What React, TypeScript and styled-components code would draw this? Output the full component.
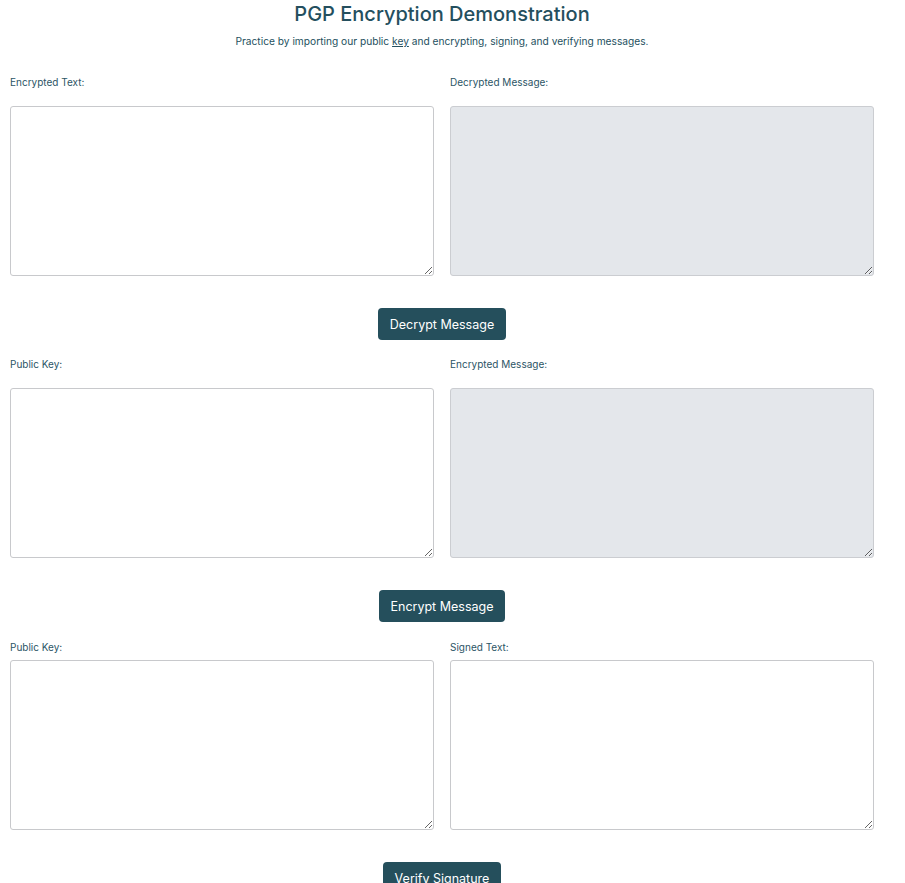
import React from "react";
import styled, { createGlobalStyle } from "styled-components";

const Global = createGlobalStyle`
  html, body { margin: 0; padding: 0; background: #ffffff; }
  body { font-family: Inter, "Liberation Sans", Arial, sans-serif; color: #244f5e; }
`;

const Page = styled.div`
  width: 864px;
  margin: 0 10px;
  display: flex;
  flex-direction: column;
`;

const Title = styled.h1`
  margin: 0;
  font-size: 20px;
  line-height: 28px;
  font-weight: 500;
  text-align: center;
  color: #244f5e;
`;

const Subtitle = styled.p`
  margin: 7px 0 0;
  font-size: 10.2px;
  line-height: 12px;
  text-align: center;
  color: #244f5e;
  a { color: inherit; text-decoration: underline; }
`;

const Section = styled.section<{ $top: number }>`
  margin-top: ${(p) => p.$top}px;
  display: flex;
  flex-direction: column;
`;

const Grid = styled.div`
  display: grid;
  grid-template-columns: 1fr 1fr;
  column-gap: 16px;
`;

const Field = styled.div`
  display: flex;
  flex-direction: column;
`;

const Label = styled.label<{ $gap: number }>`
  font-size: 10px;
  line-height: 12px;
  color: #2c5566;
  margin-bottom: ${(p) => p.$gap}px;
`;

const Area = styled.textarea`
  box-sizing: border-box;
  width: 100%;
  height: 170px;
  margin: 0;
  border: 1px solid #c8c9cc;
  border-radius: 3px;
  background: #ffffff;
  font-family: inherit;
  font-size: 12px;
  &:disabled { background: #e4e7eb; border-color: #cbcdd1; }
`;

const ButtonRow = styled.div`
  display: flex;
  justify-content: center;
  margin-top: 32px;
`;

const Button = styled.button`
  height: 32px;
  padding: 0 12px;
  border: none;
  border-radius: 4px;
  background: #254f5c;
  color: #ffffff;
  font-family: Inter, "Liberation Sans", Arial, sans-serif;
  font-size: 12.5px;
  cursor: pointer;
`;

type Pair = { left: string; right: string; rightDisabled: boolean; gap: number; button: string; top: number };

const sections: Pair[] = [
  { left: "Encrypted Text:", right: "Decrypted Message:", rightDisabled: true, gap: 18, button: "Decrypt Message", top: 29 },
  { left: "Public Key:", right: "Encrypted Message:", rightDisabled: true, gap: 18, button: "Encrypt Message", top: 18 },
  { left: "Public Key:", right: "Signed Text:", rightDisabled: false, gap: 7, button: "Verify Signature", top: 19 },
];

export default function App() {
  return (
    <>
      <Global />
      <Page>
        <Title>PGP Encryption Demonstration</Title>
        <Subtitle>
          Practice by importing our public <a href="#">key</a> and encrypting, signing, and verifying messages.
        </Subtitle>
        {sections.map((s, i) => (
          <Section key={i} $top={s.top}>
            <Grid>
              <Field>
                <Label $gap={s.gap}>{s.left}</Label>
                <Area />
              </Field>
              <Field>
                <Label $gap={s.gap}>{s.right}</Label>
                <Area disabled={s.rightDisabled} />
              </Field>
            </Grid>
            <ButtonRow>
              <Button>{s.button}</Button>
            </ButtonRow>
          </Section>
        ))}
      </Page>
    </>
  );
}
